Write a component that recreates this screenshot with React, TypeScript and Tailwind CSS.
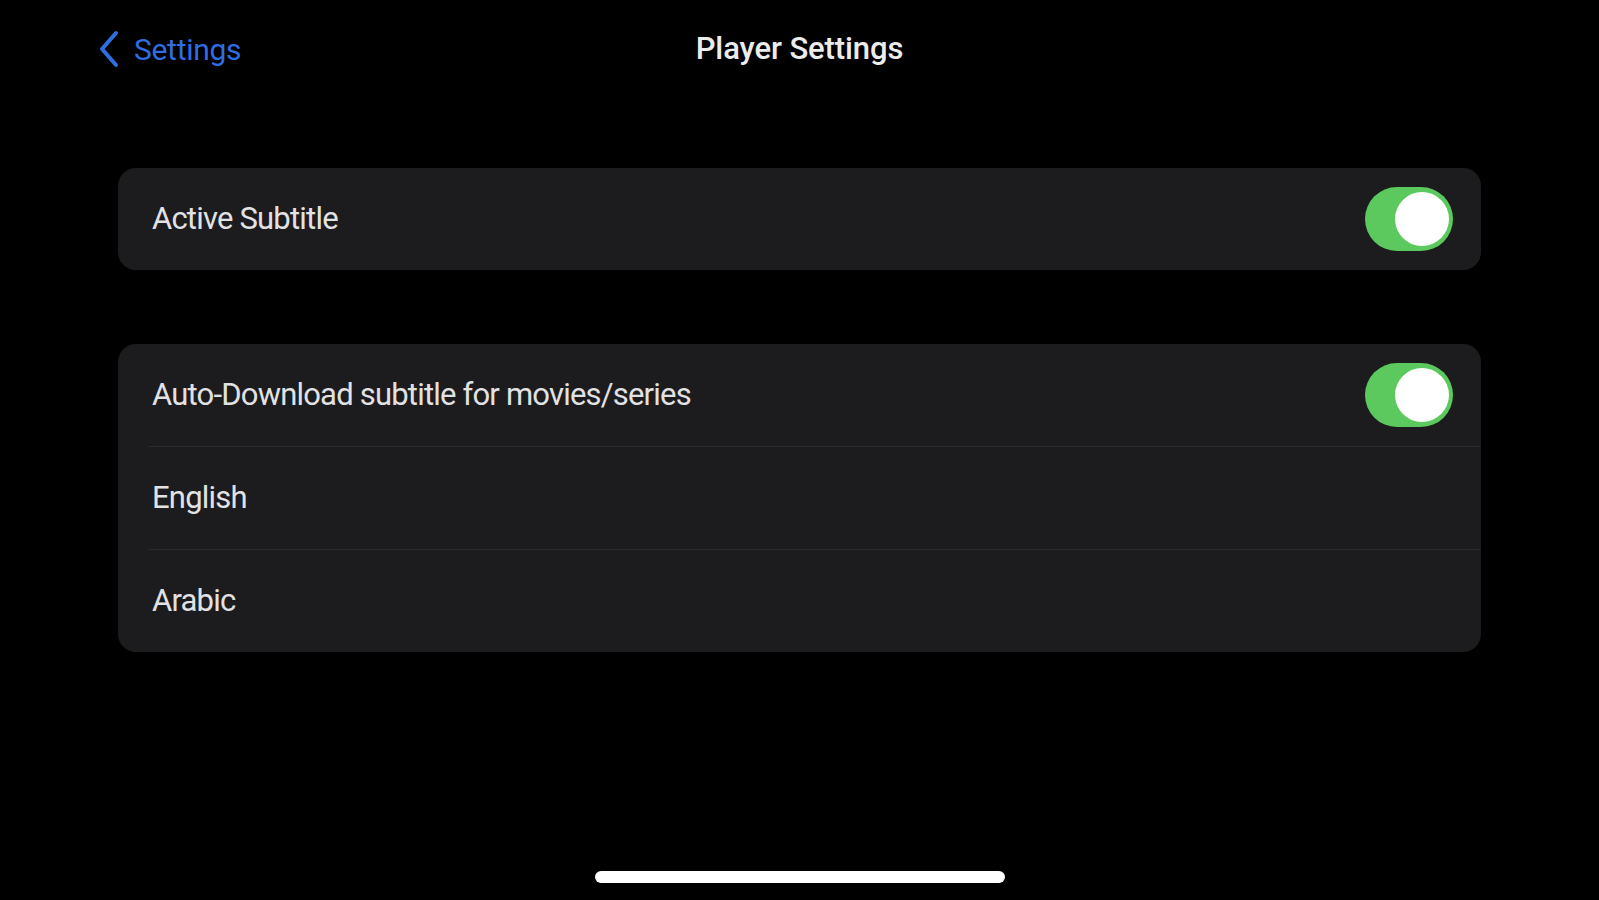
import React, { useState } from "react";

function Toggle({ on, onClick }: { on: boolean; onClick: () => void }) {
  return (
    <button
      onClick={onClick}
      className={`relative w-[88px] h-[64px] rounded-full transition-colors ${on ? "bg-[#5cc95f]" : "bg-[#39393d]"}`}
    >
      <span
        className={`absolute top-[5px] w-[54px] h-[54px] rounded-full bg-white transition-all ${on ? "right-[4px]" : "left-[4px]"}`}
      />
    </button>
  );
}

export default function App() {
  const [activeSub, setActiveSub] = useState(true);
  const [autoDownload, setAutoDownload] = useState(true);

  return (
    <div
      className="w-[1599px] h-[900px] bg-black text-[#e2e2e4] flex flex-col overflow-hidden"
      style={{ fontFamily: "Roboto, 'Liberation Sans', sans-serif" }}
    >
      {/* Nav bar */}
      <div className="grid grid-cols-[1fr_auto_1fr] items-center h-[98px] px-[98px]">
        <button className="flex items-center gap-[14px] text-[#2f6ee0] justify-self-start">
          <svg width="22" height="38" viewBox="0 0 22 38" fill="none">
            <path d="M18 3 L4 19 L18 35" stroke="currentColor" strokeWidth="4" strokeLinecap="round" strokeLinejoin="round" />
          </svg>
          <span className="text-[30px] tracking-[-0.3px]">Settings</span>
        </button>
        <h1 className="text-[31px] font-medium text-[#ececec] tracking-[-0.1px]">Player Settings</h1>
        <div />
      </div>

      {/* Content */}
      <div className="px-[118px] pt-[70px] flex flex-col gap-[74px]">
        <div className="bg-[#1c1c1e] rounded-[18px] h-[102px] flex items-center justify-between pl-[34px] pr-[28px]">
          <span className="text-[31px] tracking-[-0.8px]">Active Subtitle</span>
          <Toggle on={activeSub} onClick={() => setActiveSub(!activeSub)} />
        </div>

        <div className="bg-[#1c1c1e] rounded-[18px] pl-[30px]">
          <div className="h-[103px] flex items-center justify-between pl-[4px] pr-[28px] border-b border-[#2a2a2c]">
            <span className="text-[31px] tracking-[-0.8px]">Auto-Download subtitle for movies/series</span>
            <Toggle on={autoDownload} onClick={() => setAutoDownload(!autoDownload)} />
          </div>
          <div className="h-[103px] flex items-center pl-[4px] border-b border-[#2a2a2c]">
            <span className="text-[31px] tracking-[-0.8px]">English</span>
          </div>
          <div className="h-[102px] flex items-center pl-[4px]">
            <span className="text-[31px] tracking-[-0.8px]">Arabic</span>
          </div>
        </div>
      </div>

      <div className="flex-1" />

      {/* Home indicator */}
      <div className="flex justify-center pb-[17px]">
        <div className="w-[410px] h-[12px] rounded-full bg-white" />
      </div>
    </div>
  );
}
